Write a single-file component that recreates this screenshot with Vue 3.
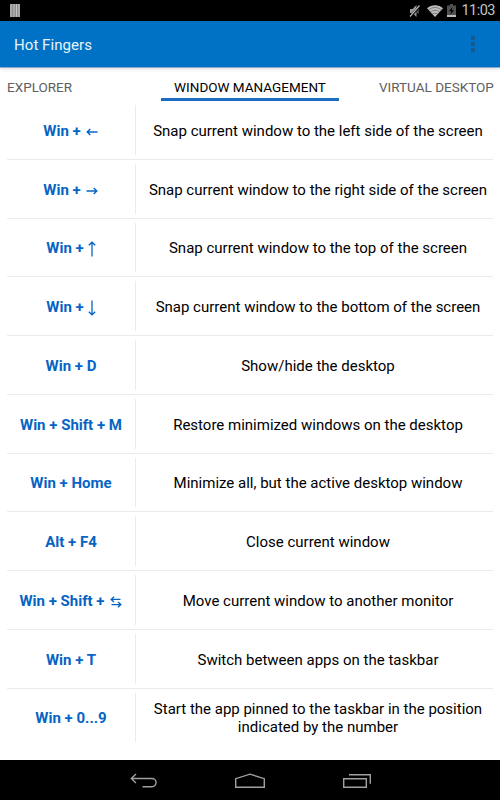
<template>
  <div class="screen">
    <div class="status-bar">
      <svg class="barcode" width="10" height="13" viewBox="0 0 10 13">
        <rect width="10" height="13" fill="#8c8c8c" />
        <path d="M1 0v13M4 0v13M6.5 0v13M9 0v13" stroke="#c4c4c4" stroke-width="1" />
      </svg>
      <div class="status-icons">
        <svg class="mute" width="12" height="14" viewBox="0 0 12 14">
          <path d="M1 5h2.5L7.5 1v12L3.5 9H1z" fill="#9a9a9a" />
          <path d="M9 4.5v5" stroke="#8c8c8c" />
          <path d="M1.5 12.5 11 1.5" stroke="#000" stroke-width="2.6" />
          <path d="M1 12.5 10.5 1.5" stroke="#b5b5b5" stroke-width="1.2" />
        </svg>
        <svg class="wifi" width="16" height="12" viewBox="0 0 16 12">
          <path d="M0 3.2C4.5-.9 11.5-.9 16 3.2L8 12z" fill="#c0c0c0" />
          <path
            d="M1.5 5c3.8-3.3 9.2-3.3 13 0M3.2 7.1c2.9-2.4 6.7-2.4 9.6 0M5 9.2c1.8-1.3 4.2-1.3 6 0"
            fill="none"
            stroke="#444"
            stroke-width=".6"
          />
        </svg>
        <svg class="battery" width="9" height="13" viewBox="0 0 9 13">
          <path d="M3 0h3v1.5h3V13H0V1.5h3z" fill="#505050" />
          <path d="M0 11h9v2H0z" fill="#bbb" />
          <path d="M5.5 3 2 7.3h2.3L3.5 10.5 7 6.2H4.7z" fill="#000" />
        </svg>
        <span class="clock">11:03</span>
      </div>
    </div>

    <header class="app-bar">
      <h1>Hot Fingers</h1>
      <button class="menu-btn" aria-label="Menu">
        <i></i>
        <i></i>
        <i></i>
      </button>
    </header>

    <nav class="tabs">
      <div
        v-for="tab in tabs"
        :key="tab.id"
        class="tab"
        :class="[tab.id, { active: tab.id === activeTab }]"
        @click="activeTab = tab.id"
      >
        <span>{{ tab.title }}</span>
      </div>
    </nav>

    <main class="shortcuts">
      <div v-for="item in shortcuts" :key="item.text" class="row">
        <div class="keys">
          <span>{{ item.keys }}</span>
          <svg
            v-if="item.icon"
            class="arrow"
            :class="item.icon"
            :width="icons[item.icon].w"
            :height="icons[item.icon].h"
            :viewBox="`0 0 ${icons[item.icon].w} ${icons[item.icon].h}`"
          >
            <path :d="icons[item.icon].d" />
          </svg>
        </div>
        <div class="description">{{ item.text }}</div>
      </div>
    </main>

    <footer class="nav-bar">
      <svg width="28" height="16" viewBox="0 0 28 16">
        <path d="M6 1 1.3 5.5 6 10M1.5 5.5H22a4.1 4.1 0 0 1 0 8.2H12.5" />
      </svg>
      <svg width="32" height="16" viewBox="0 0 32 16">
        <path d="M1.7 14.3V5.7L16 1.2l14.3 4.5v8.6z" />
      </svg>
      <svg width="30" height="16" viewBox="0 0 30 16">
        <path d="M1.7 5.7h22.6v8.6H1.7zM7 1.8h21.3v9" />
      </svg>
    </footer>
  </div>
</template>

<script setup>
import { ref } from "vue";

const activeTab = ref("window");

const tabs = [
  { id: "explorer", title: "EXPLORER" },
  { id: "window", title: "WINDOW MANAGEMENT" },
  { id: "virtual", title: "VIRTUAL DESKTOP" },
];

const icons = {
  left: { w: 12, h: 8, d: "M4.3 1 1.2 4l3.1 3M1.3 4H11.5" },
  right: { w: 12, h: 8, d: "M7.7 1l3.1 3-3.1 3M10.7 4H.5" },
  up: { w: 8, h: 16, d: "M.8 4.3 4 1.2l3.2 3.1M4 1.3V15.5" },
  down: { w: 8, h: 16, d: "M.8 11.7l3.2 3.1 3.2-3.1M4 14.7V.5" },
  swap: { w: 12, h: 12, d: "M4 .7 1.2 3.4 4 6.1M1.3 3.4H10.5M8 5.9l2.8 2.7L8 11.3M10.7 8.6H1.5" },
};

const shortcuts = [
  { keys: "Win +", icon: "left", text: "Snap current window to the left side of the screen" },
  { keys: "Win +", icon: "right", text: "Snap current window to the right side of the screen" },
  { keys: "Win +", icon: "up", text: "Snap current window to the top of the screen" },
  { keys: "Win +", icon: "down", text: "Snap current window to the bottom of the screen" },
  { keys: "Win + D", text: "Show/hide the desktop" },
  { keys: "Win + Shift + M", text: "Restore minimized windows on the desktop" },
  { keys: "Win + Home", text: "Minimize all, but the active desktop window" },
  { keys: "Alt + F4", text: "Close current window" },
  { keys: "Win + Shift +", icon: "swap", text: "Move current window to another monitor" },
  { keys: "Win + T", text: "Switch between apps on the taskbar" },
  {
    keys: "Win + 0...9",
    text: "Start the app pinned to the taskbar in the position indicated by the number",
  },
];
</script>

<style>
body {
  margin: 0;
  background: #fff;
}
</style>

<style scoped>
.screen {
  width: 500px;
  height: 800px;
  display: flex;
  flex-direction: column;
  background: #fff;
  font-family: Roboto, "Liberation Sans", sans-serif;
  overflow: hidden;
}

.status-bar {
  height: 21px;
  flex: none;
  box-sizing: border-box;
  padding: 0 5px 0 10px;
  display: flex;
  align-items: center;
  justify-content: space-between;
  background: #000;
}

.status-icons {
  display: flex;
  align-items: center;
}

.wifi {
  margin-left: 6px;
}

.battery {
  margin-left: 4px;
}

.clock {
  margin-left: 5px;
  font-size: 14.5px;
  line-height: 21px;
  letter-spacing: -0.5px;
  color: #c4c4c4;
}

.app-bar {
  height: 46px;
  flex: none;
  box-sizing: content-box;
  padding: 0 22px 0 14px;
  display: flex;
  align-items: center;
  justify-content: space-between;
  background: #0072c6;
  border-bottom: 1px solid #8ea9d3;
  box-shadow: 0 1px 4px rgba(0, 0, 0, 0.14);
}

.app-bar h1 {
  margin: 0;
  padding-top: 1px;
  font-size: 15px;
  font-weight: 400;
  letter-spacing: 0.06px;
  color: #e8f2fa;
}

.menu-btn {
  padding: 0;
  border: none;
  background: none;
  display: flex;
  flex-direction: column;
  gap: 2px;
  width: 7px;
}

.menu-btn i {
  width: 4px;
  height: 4px;
  background: #175a8e;
}

.tabs {
  height: 33px;
  flex: none;
  margin: 0 6px 0 7px;
  display: flex;
  overflow: hidden;
}

.tab {
  flex: none;
  box-sizing: border-box;
  height: 33px;
  padding-top: 12px;
  font-size: 13.5px;
  line-height: 15px;
  color: #606060;
  white-space: nowrap;
  cursor: pointer;
}

.explorer {
  width: 154px;
}

.window {
  width: 178px;
  text-align: center;
}

.virtual {
  padding-left: 40px;
}

.tab.active {
  color: #000;
  border-bottom: 3px solid #1d6cc4;
}

.shortcuts {
  flex: 1;
  margin: 0 7px;
}

.row {
  height: 58.75px;
  box-sizing: border-box;
  padding: 4px 0;
  display: flex;
  border-bottom: 1px solid #ebebeb;
  font-size: 15px;
  line-height: 18px;
}

.row:last-child {
  border-bottom-color: transparent;
}

.keys {
  width: 129px;
  box-sizing: border-box;
  padding-top: 2px;
  border-right: 1px solid #ebebeb;
  display: flex;
  align-items: center;
  justify-content: center;
  font-weight: 700;
  color: #0664c4;
}

.arrow {
  fill: none;
  stroke: #0664c4;
  stroke-width: 1.4;
}

.left,
.right,
.swap {
  margin-top: 2px;
  margin-left: 5px;
  margin-right: 1px;
}

.up,
.down {
  margin-top: 1px;
  margin-left: 4px;
  stroke-width: 1.3;
}

.description {
  flex: 1;
  padding: 2px 0 0 7px;
  display: flex;
  align-items: center;
  justify-content: center;
  text-align: center;
  color: #000;
}

.nav-bar {
  height: 40px;
  flex: none;
  box-sizing: border-box;
  padding: 2px 0 0 1px;
  display: flex;
  align-items: center;
  justify-content: center;
  gap: 76px;
  background: #000;
}

.nav-bar svg {
  fill: none;
  stroke: #a0a0a0;
  stroke-width: 1.4;
}
</style>
